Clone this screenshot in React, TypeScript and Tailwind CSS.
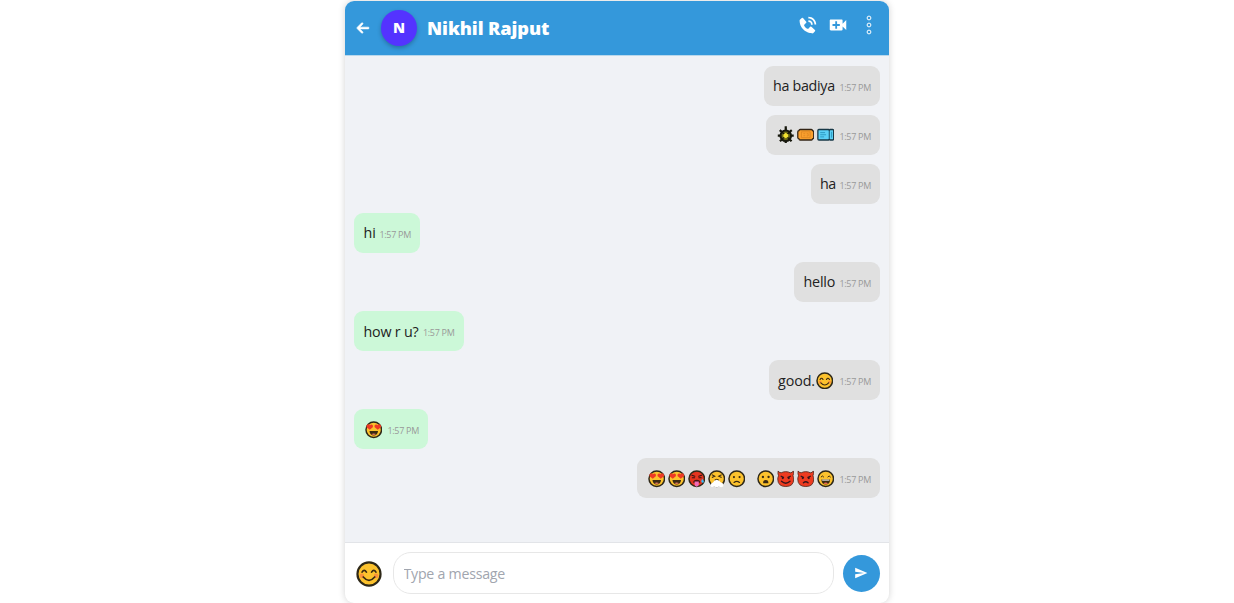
import React from "react";
import { BiSolidPhoneCall } from "react-icons/bi";
import { FaArrowLeft } from "react-icons/fa6";
import { MdVideoCall, MdSend } from "react-icons/md";

type Kind =
  | "smile" | "love" | "hot" | "sneeze" | "frown" | "worried"
  | "devilSmile" | "devilAngry" | "grin" | "gear" | "ticket" | "ticketBlue";

const INK = "#3a2a12";

function Face({ fill = "#fcc22d", children }: { fill?: string; children: React.ReactNode }) {
  return (
    <>
      <circle cx="9" cy="9" r="8" fill={fill} stroke="#2e2818" strokeWidth="1.5" />
      {children}
    </>
  );
}

function Devil({ mouth }: { mouth: string }) {
  return (
    <>
      <path d="M1.200 1q.8 1.800 3.100 1.900Q6.400 1.700 9 1.700t4.700 1.200Q16 2.800 16.800 1q.6 2.900-.4 5 .8 1.600.8 3.300 0 7.700-8.200 7.700T.8 9.300Q.8 7.600 1.600 6q-1-2.100-.4-5z" fill="#ee3b20" stroke="#5a2a1f" strokeWidth=".9" />
      <path d="M3.800 6.200l3.400 1.600M14.200 6.200l-3.400 1.600" stroke="#35151b" strokeWidth="1.300" />
      <circle cx="5.900" cy="8.300" r="1.100" fill="#35151b" />
      <circle cx="12.100" cy="8.300" r="1.100" fill="#35151b" />
      <path d={mouth} fill="none" stroke="#35151b" strokeWidth="1.400" strokeLinecap="round" />
    </>
  );
}

const drawings: Record<Kind, React.ReactNode> = {
  smile: (
    <Face>
      <circle cx="4.100" cy="10.300" r="1.600" fill="#fb923c" />
      <circle cx="13.900" cy="10.300" r="1.600" fill="#fb923c" />
      <path d="M4.200 7.700q1.500-2.500 3 0M10.800 7.700q1.500-2.500 3 0M5 11.100q4 4.600 8 0" fill="none" stroke={INK} strokeWidth="1.200" strokeLinecap="round" />
    </Face>
  ),
  love: (
    <Face>
      <path d="M4.900 9.100L1.600 6.300C.8 3.700 3.800 2.400 5 4.300 6.600 2.500 9 4 8 6.300zM13.100 9.100L10 6.300C9 4 11.400 2.500 13 4.300c1.200-1.900 4.200-.6 3.400 2z" fill="#ee3a24" />
      <path d="M4.600 10.300h8.800q-.5 4.600-4.400 4.600t-4.400-4.600z" fill={INK} />
      <path d="M6.500 13.400q2.500-1.200 5 0-2.500 2-5 0z" fill="#e9795d" />
    </Face>
  ),
  hot: (
    <Face fill="#e5351f">
      <path d="M4 5.400l3 1M14 5.400l-3 1M4.400 8h2.400M11.200 8h2.400" stroke="#351313" strokeWidth="1.100" strokeLinecap="round" />
      <path d="M5.300 13q0-3 3.700-3t3.700 3z" fill="#481514" />
      <path d="M6.800 11.900h4.300v3q-.3 2.200-2.200 2.200t-2.100-2.200z" fill="#f06bb8" />
      <path d="M14.800 9q3 4 .2 4.200-2.600-.3-.2-4.200z" fill="#38bdf8" />
    </Face>
  ),
  sneeze: (
    <Face>
      <path d="M4 4.800l3 1.500-3 1.500M14 4.800l-3 1.500 3 1.500" fill="none" stroke={INK} strokeWidth="1.100" />
      <path d="M6.600 10.700q2.400-1.400 4.800 0l1.500 1.900 2.300 1.100.7 3-2.200 1-2.500-.5-2.300.5-2.400-.5-2.700.4-1.300-1.500.8-2.200 2.100-1.300z" fill="#fff" />
      <path d="M6.800 10.300q2.200-1.400 4.400 0" fill="none" stroke={INK} />
    </Face>
  ),
  frown: (
    <Face>
      <circle cx="6.100" cy="7.300" r="1.100" fill={INK} />
      <circle cx="11.900" cy="7.300" r="1.100" fill={INK} />
      <path d="M6.200 12.800q2.800-2.300 5.600 0" fill="none" stroke={INK} strokeWidth="1.300" strokeLinecap="round" />
    </Face>
  ),
  worried: (
    <Face>
      <circle cx="6.100" cy="7.200" r="1.200" fill={INK} />
      <circle cx="11.900" cy="7.200" r="1.200" fill={INK} />
      <path d="M6.300 13.700q-.2-3.300 2.700-3.300t2.700 3.300z" fill={INK} />
    </Face>
  ),
  devilSmile: <Devil mouth="M4.600 11.600q4.400 4 8.800 0" />,
  devilAngry: <Devil mouth="M6.600 13.200q2.400-2.300 4.800 0" />,
  grin: (
    <Face>
      <path d="M4 7.400q1.500-2.500 3.100 0M10.900 7.400q1.600-2.500 3.100 0" fill="none" stroke={INK} strokeWidth="1" />
      <path d="M4.500 9.700h9q-.3 5.300-4.500 5.300T4.500 9.700z" fill={INK} />
      <path d="M5.300 9.900h7.400v1H5.300z" fill="#fff" />
      <path d="M6.600 13.500q2.400-1.300 4.800 0-2.400 1.800-4.800 0z" fill="#ec6a4b" />
    </Face>
  ),
  gear: (
    <>
      <path d="M9 .3V5M2.800 4.200l3 2.500M15.200 4.200l-3 2.500M.8 10h4M13.200 10h4M3 15.700l2.800-2.500M15 15.700l-2.800-2.500M9 14v3.600" stroke="#17180d" strokeWidth="2.300" />
      <circle cx="9" cy="10" r="5.400" fill="#6c6b16" stroke="#17180d" strokeWidth="2.200" />
      <path d="M9 2v3M5.300 6.500l7.400 7M12.700 6.500l-7.400 7" stroke="#17180d" strokeWidth="1.300" />
      <path d="M9 6.900l2.400 1.800v2.700L9 12.700l-2.400-1.300V8.700z" fill="#f2e331" />
    </>
  ),
  ticket: (
    <>
      <path d="M3.200 3.600h11.600q1 0 1.200 1.200 1.200.2 1.200 1.300v5.800q0 1.100-1.200 1.300-.2 1.200-1.200 1.200H3.200q-1 0-1.200-1.200-1.200-.2-1.200-1.300V6.100Q.8 5 2 4.800q.2-1.200 1.200-1.200z" fill="#fba02e" stroke="#332415" strokeWidth="1.300" />
      <path d="M4.500 6h9v6h-9zM6.500 7.900h2M6.500 10h2M9.900 7.900h1.600v2.300H9.900" fill="none" stroke="#d98322" strokeWidth=".8" />
    </>
  ),
  ticketBlue: (
    <>
      <path d="M1.900 3.600h9.900l.8.800.8-.8h2.700q1 0 1 1v8.800q0 1-1 1h-2.700l-.8-.8-.8.800H1.900q-1 0-1-1V4.600q0-1 1-1z" fill="#5bd0f6" stroke="#173746" strokeWidth="1.300" />
      <path d="M12.600 5v8" stroke="#174e65" strokeWidth="1" />
      <path d="M3.300 6.800h5M3.300 9h6M3.300 11.200h4M15 6v6" stroke="#2895bd" strokeWidth=".9" />
    </>
  ),
};

function Emoji({ kind, className = "size-[17.500px]" }: { kind: Kind; className?: string }) {
  return (
    <svg viewBox="0 0 18 18" className={`shrink-0 ${className}`} aria-hidden="true">
      {drawings[kind]}
    </svg>
  );
}

interface Message {
  mine: boolean;
  text?: string;
  tracking?: string;
  width: string;
  groups?: Kind[][];
}

const messages: Message[] = [
  { mine: true, text: "ha badiya", tracking: "tracking-[-0.3px]", width: "w-[116.500px]" },
  { mine: true, groups: [["gear", "ticket", "ticketBlue"]], width: "w-[114px]" },
  { mine: true, text: "ha", tracking: "tracking-[-0.5px]", width: "w-[69.500px]" },
  { mine: false, text: "hi", tracking: "tracking-[-0.1px]", width: "w-[66px]" },
  { mine: true, text: "hello", tracking: "tracking-[-0.2px]", width: "w-[86px]" },
  { mine: false, text: "how r u?", tracking: "tracking-[-0.2px]", width: "w-[109.500px]" },
  { mine: true, text: "good.", tracking: "tracking-[-0.1px]", groups: [["smile"]], width: "w-[111.500px]" },
  { mine: false, groups: [["love"]], width: "w-[74px]" },
  {
    mine: true,
    groups: [["love", "love", "hot", "sneeze", "frown"], ["worried", "devilSmile", "devilAngry", "grin"]],
    width: "w-[243px]",
  },
];

function Bubble({ message }: { message: Message }) {
  const { mine, text, tracking = "", groups, width } = message;
  return (
    <div
      className={`flex h-10 items-center justify-between rounded-[9px] pl-[9.500px] pr-[9px] ${width} ${
        mine ? "self-end bg-[#e0e0e0]" : "self-start bg-[#ccf8d8]"
      }`}
    >
      <div className="mt-px flex items-center whitespace-nowrap text-[14.300px] leading-[22px] text-[#222]">
        {text && <span className={tracking}>{text}</span>}
        {groups && (
          <span className="flex gap-[11.500px] pl-[1px]">
            {groups.map((group, i) => (
              <span key={i} className="flex gap-[2.500px]">
                {group.map((kind, j) => (
                  <Emoji key={j} kind={kind} />
                ))}
              </span>
            ))}
          </span>
        )}
      </div>
      <span className="mt-[4px] whitespace-nowrap text-[9px] leading-3 tracking-[-0.3px] text-[#999]">1:57 PM</span>
    </div>
  );
}

function HollowDots({ className }: { className: string }) {
  return (
    <svg viewBox="0 0 6 20" className={className} fill="none" stroke="currentColor" strokeWidth="1" aria-hidden="true">
      <circle cx="3" cy="3" r="1.900" />
      <circle cx="3" cy="10" r="1.900" />
      <circle cx="3" cy="17" r="1.900" />
    </svg>
  );
}

export default function App() {
  return (
    <div className="flex h-[603px] justify-center overflow-hidden bg-white font-['Open_Sans','Noto_Sans',sans-serif]">
      <main className="mt-px flex h-[602px] w-[544px] flex-col overflow-hidden rounded-[9px] bg-white shadow-[0_0_7px_rgba(0,0,0,0.18)]">
        <header className="flex h-[55px] shrink-0 items-center border-b border-[#b9d8ec] bg-[#3498db] pl-[11px] pr-[17px] text-white">
          <FaArrowLeft className="size-[14px]" stroke="currentColor" strokeWidth="22" />
          <div className="ml-[11px] flex size-9 items-center justify-center rounded-full bg-[#5433ff] text-[14.500px] font-extrabold shadow-[0_2px_4px_rgba(0,0,0,0.25)]">
            N
          </div>
          <h1 className="ml-[10px] whitespace-nowrap pt-px font-['Noto_Sans','Open_Sans',sans-serif] text-[18.200px] font-black tracking-[-0.1px]">
            Nikhil Rajput
          </h1>
          <div className="ml-auto flex items-center pb-[6px]">
            <BiSolidPhoneCall className="size-[21px]" />
            <MdVideoCall className="ml-[9px] size-[22px]" />
            <HollowDots className="ml-[17px] h-5 w-[6px]" />
          </div>
        </header>
        <section className="flex grow flex-col gap-[9.100px] bg-[#f0f2f6] px-[9px] pt-[9.600px]">
          {messages.map((message, i) => (
            <Bubble key={i} message={message} />
          ))}
        </section>
        <footer className="flex h-[61px] shrink-0 items-center border-t border-[#e2e4e8] px-[9px]">
          <button type="button" className="ml-[2px] mr-px pt-[2px]" aria-label="Choose emoji">
            <Emoji kind="smile" className="size-[26px]" />
          </button>
          <input
            type="text"
            placeholder="Type a message"
            className="ml-[10px] h-[42px] min-w-0 grow rounded-[18px] border border-[#e7e7e7] px-[9.500px] text-[14.200px] tracking-[-0.25px] outline-none placeholder:text-[#a1a5ae]"
          />
          <button type="button" className="ml-[9px] flex size-[37px] items-center justify-center rounded-full bg-[#3498db] pr-px text-white" aria-label="Send">
            <MdSend className="size-[14px]" />
          </button>
        </footer>
      </main>
    </div>
  );
}
